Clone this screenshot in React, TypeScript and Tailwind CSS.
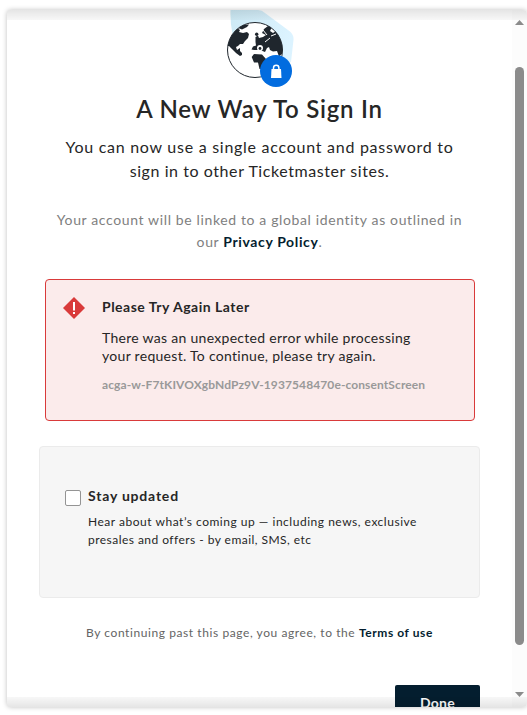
function Globe() {
  return (
    <svg className="block" width="72" height="80" viewBox="226 10 72 80">
      <defs>
        <linearGradient id="sky" x1="0" y1="0" x2="1" y2="0.3">
          <stop offset="0" stopColor="#cdeaf5" />
          <stop offset="1" stopColor="#dcf3ff" />
        </linearGradient>
        <clipPath id="disc">
          <circle cx="255" cy="50" r="27.500" />
        </clipPath>
      </defs>
      <path d="M230.500 10H258Q262 10 265 13L290 31.500Q294 35 293.500 40L291 62L270 70L240 50L232.500 34Q230 22 230.500 10Z" fill="url(#sky)" />
      <circle cx="255" cy="50" r="27.500" fill="#fff" />
      <g clipPath="url(#disc)" fill="#1f262d">
        <path d="M226 46V40L231 32L237 28L240 30L239 32L243 33L247 32L249 34L248 38L245 41L243 44L240 44L238 46L236 47L237 50L240 48V51L242 53V55L240 56L236 53L232 49L229 46Z" />
        <path d="M238 28L243 25L249 24.500L247 27L242 29.500Z" />
        <path d="M251.500 49.500L253 46.500L256 45.500L255.500 42V37L258 35.500L259 38L263 37L266 35L262 33L264 29L268 26L272 27L270 31L273 33L276 31L281 38L283 45V53L279 56.500L277 51L273 51.500L270 50L269 47L267 48L265 52L262.500 51L261 50H256L254 50Z" />
        <path d="M251.700 57L254 54L262 54.500L266 59L264 64L262 69H259.500L258 62.500H254Z" />
        <circle cx="256.700" cy="34.300" r="1.700" />
        <path d="M263 30L267 35M271 36L276 34M265 42L270 38" stroke="#fff" strokeWidth="1" />
      </g>
      <circle cx="260" cy="48" r="3" fill="#fff" />
      <circle cx="260" cy="48.500" r="1.400" fill="#1f262d" />
      <circle cx="255" cy="50" r="27.500" fill="none" stroke="#1f262d" strokeWidth="1" />
      <circle cx="276" cy="71" r="16" fill="#026cdf" />
      <path d="M271.500 69H281L281.500 78H271Z" fill="#fff" />
      <path d="M273.500 70V68a2.700 2.700 0 0 1 5.400 0V70" fill="none" stroke="#fff" strokeWidth="1.500" />
    </svg>
  );
}

export default function App() {
  return (
    <div className="h-[715px] w-[527px] overflow-hidden bg-white pl-[7px] pt-[10px] font-['Lato',sans-serif] text-[#262626]">
      <div className="relative flex h-[697px] w-[520px] overflow-hidden rounded-[4px] bg-white shadow-[0_0_5px_rgba(0,0,0,0.25)]">
        <main className="flex w-[505px] shrink-0 flex-col whitespace-nowrap text-center">
          <div className="flex h-20 pl-[219px]"><Globe /></div>
          <h1 className="mt-[3px] h-[32px] text-2xl font-semibold leading-8 tracking-[0.75px]">A New Way To Sign In</h1>
          <p className="mt-[10px] text-base leading-6 tracking-[0.73px]">You can now use a single account and password to<br /><span className="tracking-[0.57px]">sign in to other Ticketmaster sites.</span></p>
          <p className="mt-[26px] text-sm leading-[22px] tracking-[0.63px] text-[#808080]">Your account will be linked to a global identity as outlined in<br />our <a className="font-bold text-[#041e2f]">Privacy Policy</a>.</p>
          <section className="ml-[38px] mt-[26px] flex h-[142px] w-[430px] shrink-0 rounded border border-[#d93a3a] bg-[#fbebeb] pl-[17px] pt-[17px] text-left">
            <svg className="shrink-0" width="22" height="22" viewBox="0 0 22 22">
              <path d="M11 0L22 11L11 22L0 11Z" fill="#d93a3a" />
              <path d="M11 5V13.500M11 15V17" stroke="#fff" strokeWidth="2" />
            </svg>
            <div className="ml-[17px] -mt-px">
              <h2 className="text-sm font-bold leading-[22px] tracking-[0.5px]">Please Try Again Later</h2>
              <p className="mt-[11px] text-sm leading-[18px] tracking-[0.29px]">There was an unexpected error while processing<br />your request. To continue, please try again.</p>
              <p className="mt-[11px] text-xs font-bold leading-[18px] tracking-[0.1px] text-[#999]">acga-w-F7tKIVOXgbNdPz9V-1937548470e-consentScreen</p>
            </div>
          </section>
          <section className="ml-[32px] mt-[25px] flex h-[152px] w-[441px] shrink-0 rounded border border-[#ebebeb] bg-[#f6f6f6] pl-[25px] pt-[39px] text-left">
            <span className="mt-[4px] size-4 shrink-0 rounded-[2px] border border-[#949494] bg-white" />
            <div className="ml-[7px]">
              <h2 className="text-sm font-bold leading-5 tracking-[0.8px]">Stay updated</h2>
              <p className="mt-[7px] text-xs leading-[18px] tracking-[0.52px]">Hear about what’s coming up — including news, exclusive<br /><span className="tracking-[0.46px]">presales and offers - by email, SMS, etc</span></p>
            </div>
          </section>
          <p className="mt-[26px] text-xs leading-[18px] tracking-[0.58px] text-[#646464]">By continuing past this page, you agree, to the <a className="font-bold text-[#041e2f]">Terms of use</a></p>
          <button className="ml-[388px] mt-[43px] flex h-10 w-[85px] shrink-0 justify-center rounded-[2px] bg-[#041e2f] pt-[8px] text-sm font-bold leading-5 tracking-[0.2px] text-white">Done</button>
        </main>
        <aside className="flex w-[15px] shrink-0 flex-col items-center bg-[#fcfcfc]">
          <svg className="mt-[10px] shrink-0" width="9" height="5"><path d="M0 5L4.500 0L9 5Z" fill="#8b8b8b" /></svg>
          <span className="mt-[42px] h-[578px] w-[9px] shrink-0 rounded-full bg-[#8b8b8b]" />
          <svg className="mt-[47px] shrink-0" width="9" height="5"><path d="M0 0L4.500 5L9 0Z" fill="#8b8b8b" /></svg>
        </aside>
        <div className="absolute inset-x-0 top-0 h-[10px] bg-gradient-to-b from-black/10 to-black/3" />
        <div className="absolute inset-x-0 bottom-0 h-[10px] bg-gradient-to-t from-black/10 to-black/3" />
      </div>
    </div>
  );
}
